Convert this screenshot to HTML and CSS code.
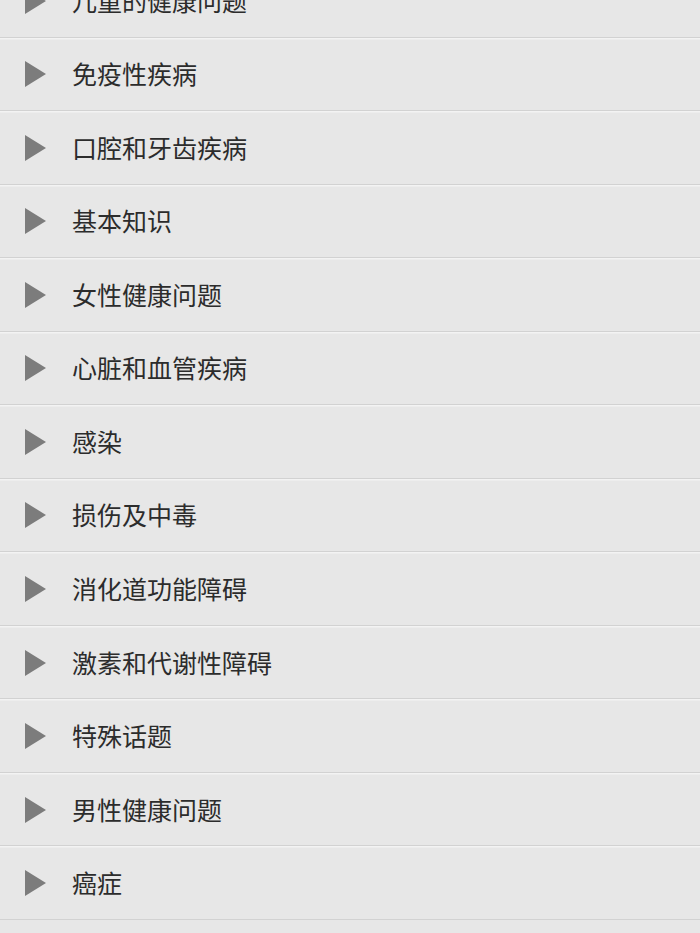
FILE: index.html
```html
<!DOCTYPE html>
<html lang="zh">
<head>
<meta charset="utf-8">
<link rel="stylesheet" href="styles.css">
</head>
<body>
<ul class="list">
  <li class="row"><span class="arrow"></span><span class="label">儿童的健康问题</span></li>
  <li class="row"><span class="arrow"></span><span class="label">免疫性疾病</span></li>
  <li class="row"><span class="arrow"></span><span class="label">口腔和牙齿疾病</span></li>
  <li class="row"><span class="arrow"></span><span class="label">基本知识</span></li>
  <li class="row"><span class="arrow"></span><span class="label">女性健康问题</span></li>
  <li class="row"><span class="arrow"></span><span class="label">心脏和血管疾病</span></li>
  <li class="row"><span class="arrow"></span><span class="label">感染</span></li>
  <li class="row"><span class="arrow"></span><span class="label">损伤及中毒</span></li>
  <li class="row"><span class="arrow"></span><span class="label">消化道功能障碍</span></li>
  <li class="row"><span class="arrow"></span><span class="label">激素和代谢性障碍</span></li>
  <li class="row"><span class="arrow"></span><span class="label">特殊话题</span></li>
  <li class="row"><span class="arrow"></span><span class="label">男性健康问题</span></li>
  <li class="row"><span class="arrow"></span><span class="label">癌症</span></li>
</ul>
</body>
</html>
```
FILE: styles.css
```css
html, body {
  margin: 0;
  padding: 0;
  background: #e7e7e7;
  overflow: hidden;
}
.list {
  list-style: none;
  margin: -36px 0 0 0;
  padding: 0;
}
.row {
  box-sizing: border-box;
  height: 73.54px;
  display: flex;
  align-items: center;
  padding-left: 25px;
  border-bottom: 1.5px solid #d2d2d2;
  box-shadow: 0 1.5px 0 #f3f3f3;
  position: relative;
}
.arrow {
  width: 0;
  height: 0;
  border-top: 13.5px solid transparent;
  border-bottom: 13.5px solid transparent;
  border-left: 21px solid #7c7c7c;
  margin-top: 1px;
}
.label {
  margin-left: 26px;
  font-family: "Noto Sans CJK SC", "Noto Sans", sans-serif;
  font-size: 25px;
  color: #2c2c2c;
  line-height: 1;
}
```
